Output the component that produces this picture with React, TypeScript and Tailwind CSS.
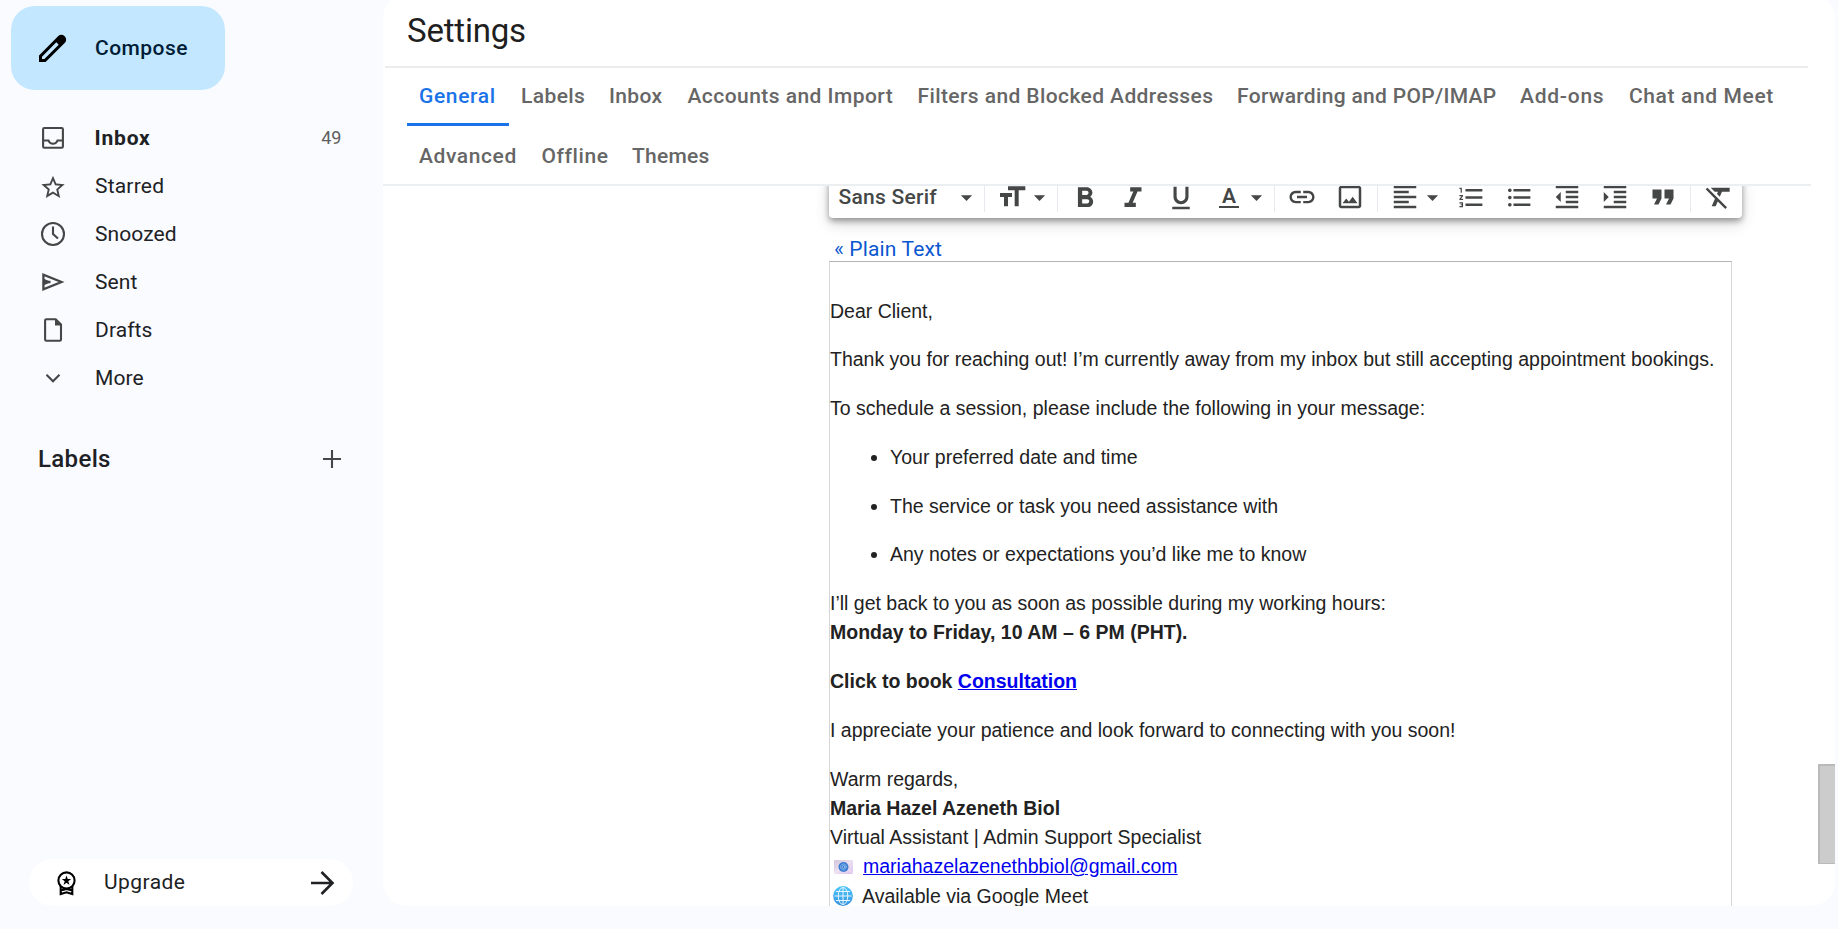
import type { ReactNode } from 'react';
import {
  MdArrowDropDown,
  MdFormatAlignLeft,
  MdFormatBold,
  MdFormatClear,
  MdFormatIndentDecrease,
  MdFormatIndentIncrease,
  MdFormatItalic,
  MdFormatListBulleted,
  MdFormatListNumbered,
  MdFormatQuote,
  MdFormatSize,
  MdFormatUnderlined,
  MdLink,
  MdOutlineImage,
  MdStarBorder,
} from 'react-icons/md';

function Glyph({ children }: { children: ReactNode }) {
  return (
    <svg className="size-[30px] shrink-0" viewBox="0 0 30 30" fill="none" stroke="currentColor" strokeWidth="2.1">
      {children}
    </svg>
  );
}

const folders = [
  {
    label: 'Starred',
    spacing: 'tracking-[0.2px]',
    icon: <MdStarBorder className="mx-px size-7 shrink-0 translate-y-[1.5px]" />,
  },
  {
    label: 'Snoozed',
    spacing: 'tracking-[0.1px]',
    icon: (
      <Glyph>
        <circle cx="15" cy="15" r="11" />
        <path d="M15 7.5V15l5 4.6" />
      </Glyph>
    ),
  },
  {
    label: 'Sent',
    spacing: 'tracking-[0.1px]',
    icon: (
      <Glyph>
        <path d="M5.4 7.6v14.8L23.5 15zM5.4 15h7" strokeWidth="2.3" />
        <path d="M5.4 11.6L13 15l-7.6 3.4z" fill="currentColor" stroke="none" />
      </Glyph>
    ),
  },
  {
    label: 'Drafts',
    spacing: 'tracking-[0.1px]',
    icon: (
      <Glyph>
        <path d="M8.3 4.2h9.4l5.3 5.3v15.1a1.2 1.2 0 0 1-1.2 1.2H8.3a1.2 1.2 0 0 1-1.2-1.2V5.4a1.2 1.2 0 0 1 1.2-1.2z" />
        <path d="M17 4l6.5 6.5H17z" fill="currentColor" stroke="none" />
      </Glyph>
    ),
  },
  {
    label: 'More',
    spacing: 'tracking-[0.1px]',
    icon: (
      <Glyph>
        <path d="M8.5 11.8l6.5 6.4 6.5-6.4" />
      </Glyph>
    ),
  },
];

function Sidebar() {
  return (
    <aside className="flex w-[383px] shrink-0 flex-col pt-1.5 text-[21px] text-[#202124]">
      <button className="ml-[11px] flex h-[84px] w-[214px] items-center rounded-3xl bg-[#c2e7ff] pl-[27px] font-medium tracking-[0.45px] text-[#001d35]">
        <svg className="size-[30px] shrink-0 text-black" viewBox="0 0 30 30" fill="currentColor">
          <path
            fillRule="evenodd"
            d="M1 22.5L20.3 3.1a4.3 4.3 0 0 1 6.1 0l.5.5a4.3 4.3 0 0 1 0 6.1L7.6 29H1zM4 23.7V26h2.4L20.7 11.7l-2.4-2.4z"
          />
        </svg>
        <span className="ml-[27px] pt-0.5">Compose</span>
      </button>

      <nav className="mt-6 flex flex-col">
        <a className="flex h-12 items-center pl-[38px] font-bold">
          <span className="text-[#444746]">
            <Glyph>
              <rect x="5.1" y="5" width="19.8" height="19.8" rx="1.2" />
              <path d="M5 17.5h5.5c.8 2.2 2.3 3.3 4.5 3.3s3.7-1.1 4.5-3.3H25" />
            </Glyph>
          </span>
          <span className="ml-[26.5px] pt-0.5 tracking-[0.8px]">Inbox</span>
          <span className="mr-[42px] ml-auto text-lg font-normal tracking-[-0.3px] text-[#5e5e5e]">49</span>
        </a>
        {folders.map((f) => (
          <a key={f.label} className="flex h-12 items-center pl-[38px]">
            <span className="flex text-[#444746]">{f.icon}</span>
            <span className={`ml-[27px] pt-0.5 ${f.spacing}`}>{f.label}</span>
          </a>
        ))}
      </nav>

      <div className="mt-8 flex h-12 items-center justify-between pr-9 pl-[38px] text-2xl font-medium tracking-[0.35px]">
        <span className="pt-0.5">Labels</span>
        <svg className="size-[30px] text-[#444746]" viewBox="0 0 30 30" stroke="currentColor" strokeWidth="2.1">
          <path d="M15 7v18M6 16h18" />
        </svg>
      </div>

      <button className="mt-auto mb-[23px] ml-[29px] flex h-[47px] w-[324px] items-center rounded-full bg-white pr-[15px] pl-[22px]">
        <svg className="size-[30px] shrink-0 text-black" viewBox="0 0 30 30" fill="none" stroke="currentColor" strokeWidth="2.1">
          <circle cx="15.5" cy="12.5" r="8.1" />
          <path d="M9.7 18v8l5.8-1.7 5.8 1.7v-8M9.7 22.5l5.8-1.5 5.8 1.5" />
          <path
            d="M15.5 7.5l1.2 3.6h3.5l-2.9 2.2 1.2 3.6-3-2.2-3 2.2 1.2-3.6-2.9-2.2h3.5z"
            fill="currentColor"
            stroke="none"
          />
        </svg>
        <span className="ml-[23px] tracking-[0.45px]">Upgrade</span>
        <svg className="ml-auto size-[30px]" viewBox="0 0 30 30" fill="none" stroke="currentColor" strokeWidth="2.6">
          <path d="M3 15h22M13.5 4L24.5 15l-11 11" />
        </svg>
      </button>
    </aside>
  );
}

const tabRows = [
  [
    { label: 'General', box: 'w-[102px] tracking-[0.65px]' },
    { label: 'Labels', box: 'w-[88px] tracking-[0.4px]' },
    { label: 'Inbox', box: 'w-[78.5px] tracking-[0.35px]' },
    { label: 'Accounts and Import', box: 'w-[230px] tracking-[0.45px]' },
    { label: 'Filters and Blocked Addresses', box: 'w-[319.5px] tracking-[0.4px]' },
    { label: 'Forwarding and POP/IMAP', box: 'w-[283px] tracking-[0.31px]' },
    { label: 'Add-ons', box: 'w-[109px] tracking-[0.75px]' },
    { label: 'Chat and Meet', box: 'w-[170px] tracking-[0.62px]' },
  ],
  [
    { label: 'Advanced', box: 'w-[122.5px] tracking-[0.6px]' },
    { label: 'Offline', box: 'w-[90.5px] tracking-[0.6px]' },
    { label: 'Themes', box: 'w-[102px] tracking-[0.25px]' },
  ],
];

function Separator() {
  return <div className="h-[30px] w-px shrink-0 bg-[#e6eaef]" />;
}

function Cell({ children }: { children: ReactNode }) {
  return <div className="flex w-12 shrink-0 items-center justify-center">{children}</div>;
}

function Slot({ children }: { children: ReactNode }) {
  return <div className="flex w-[30px] shrink-0 items-center justify-center">{children}</div>;
}

function Caret() {
  return (
    <div className="flex w-6 shrink-0 justify-center">
      <MdArrowDropDown className="size-[27px] shrink-0" />
    </div>
  );
}

function Toolbar() {
  return (
    <div className="-mt-[10px] ml-[446px] flex h-[42px] w-[913px] shrink-0 items-center rounded-[4px] bg-white text-[#444746] shadow-[0_3px_6px_rgba(0,0,0,0.36),0_6px_16px_rgba(0,0,0,0.14)]">
      <div className="flex w-[155px] items-center pr-1.5 pl-[9.5px]">
        <span className="flex-1 text-[21px] leading-6 font-medium tracking-[0.25px]">Sans Serif</span>
        <Caret />
      </div>
      <Separator />
      <div className="flex w-[72px] items-center pl-3">
        <Slot>
          <MdFormatSize className="size-8 shrink-0" />
        </Slot>
        <Caret />
      </div>
      <Separator />
      <div className="w-[3px]" />
      <Cell>
        <MdFormatBold className="size-[34px] translate-y-[1.5px]" />
      </Cell>
      <Cell>
        <MdFormatItalic className="size-[34px] translate-y-[1.5px]" />
      </Cell>
      <Cell>
        <MdFormatUnderlined className="size-[30px] translate-y-px" />
      </Cell>
      <div className="flex w-[69px] items-center pl-[9px]">
        <div className="flex w-[30px] flex-col items-center">
          <span className="text-[21px] leading-[20px] font-semibold">A</span>
          <span className="h-[2.5px] w-5 bg-[#444746]" />
        </div>
        <Caret />
      </div>
      <Separator />
      <div className="w-[3px]" />
      <Cell>
        <MdLink className="size-[30px]" />
      </Cell>
      <Cell>
        <MdOutlineImage className="size-[30px]" />
      </Cell>
      <div className="w-[3px]" />
      <Separator />
      <div className="flex w-[69px] items-center pl-3">
        <Slot>
          <MdFormatAlignLeft className="size-[30px]" />
        </Slot>
        <Caret />
      </div>
      <Cell>
        <MdFormatListNumbered className="size-[29px]" />
      </Cell>
      <Cell>
        <MdFormatListBulleted className="size-[29px]" />
      </Cell>
      <Cell>
        <MdFormatIndentDecrease className="size-[30px]" />
      </Cell>
      <Cell>
        <MdFormatIndentIncrease className="size-[30px]" />
      </Cell>
      <Cell>
        <MdFormatQuote className="size-9" />
      </Cell>
      <div className="w-[3px]" />
      <Separator />
      <div className="w-[3px]" />
      <Cell>
        <MdFormatClear className="size-8 translate-x-px" />
      </Cell>
    </div>
  );
}

function MailIcon() {
  return (
    <svg className="ml-1 h-[14px] w-[19px]" viewBox="0 0 19 14">
      <defs>
        <linearGradient id="paper" x1="0" y1="0" x2="1" y2="1">
          <stop offset="0" stopColor="#d3c6dc" />
          <stop offset="0.5" stopColor="#ecdff0" />
          <stop offset="1" stopColor="#dcc3ee" />
        </linearGradient>
      </defs>
      <rect width="19" height="14" rx="0.5" fill="url(#paper)" />
      <path d="M0 13.5l7-6M19 13.5l-7-6" stroke="#f6eff9" strokeWidth="0.8" />
      <circle cx="9.5" cy="7" r="5" fill="#3a7bd0" />
      <circle cx="9.5" cy="7" r="1.5" fill="none" stroke="#a8d2f8" strokeWidth="0.7" />
      <path d="M11 5.5v2.2c0 1.1 1.5.9 1.5-.7a3 3 0 1 0-1.5 2.6" fill="none" stroke="#a8d2f8" strokeWidth="0.6" />
    </svg>
  );
}

function GlobeIcon() {
  return (
    <svg className="ml-[3px] size-5" viewBox="0 0 20 20">
      <defs>
        <linearGradient id="sea" x1="0" y1="0" x2="0" y2="1">
          <stop offset="0" stopColor="#4cc6fb" />
          <stop offset="1" stopColor="#3a93e0" />
        </linearGradient>
      </defs>
      <circle cx="10" cy="10" r="9.9" fill="url(#sea)" />
      <g fill="none" stroke="#e4f6ff" strokeWidth="1">
        <path d="M10 1.5v17M1.5 10h17M3 5.5h14M3 14.5h14" />
        <ellipse cx="10" cy="10" rx="4.8" ry="8.5" />
      </g>
    </svg>
  );
}

function Message() {
  return (
    <div className="ml-[446px] flex w-[903px] shrink-0 flex-col gap-[19.5px] border border-b-0 border-[#d6d6d6] border-t-[#b4b4b4] pt-[34.5px] pb-10 font-['Liberation_Sans',Arial,sans-serif] text-[19.5px] leading-[29.25px] whitespace-nowrap text-[#222]">
      <p>Dear Client,</p>
      <p>Thank you for reaching out! I’m currently away from my inbox but still accepting appointment bookings.</p>
      <p>To schedule a session, please include the following in your message:</p>
      <ul className="flex list-disc flex-col gap-[19.5px] pl-[60px]">
        <li>Your preferred date and time</li>
        <li>The service or task you need assistance with</li>
        <li>Any notes or expectations you’d like me to know</li>
      </ul>
      <p>
        I’ll get back to you as soon as possible during my working hours:
        <br />
        <b>Monday to Friday, 10 AM – 6 PM (PHT).</b>
      </p>
      <p className="font-bold">
        Click to book <a className="text-[#0000ee] underline">Consultation</a>
      </p>
      <p>I appreciate your patience and look forward to connecting with you soon!</p>
      <div>
        <p>Warm regards,</p>
        <p className="font-bold">Maria Hazel Azeneth Biol</p>
        <p>Virtual Assistant | Admin Support Specialist</p>
        <p className="flex items-center gap-2.5">
          <MailIcon />
          <a className="text-[#0000ee] underline">mariahazelazenethbbiol@gmail.com</a>
        </p>
        <p className="flex items-center gap-[9px]">
          <GlobeIcon />
          Available via Google Meet
        </p>
      </div>
    </div>
  );
}

export default function App() {
  return (
    <div className="flex h-[929px] w-[1838px] overflow-hidden bg-[#f9fbff] font-['Roboto',sans-serif]">
      <Sidebar />
      <main className="relative -mt-1.5 flex h-[912px] w-[1452px] shrink-0 flex-col overflow-hidden rounded-3xl bg-white">
        <header className="mr-[27px] ml-0.5 flex h-[74px] shrink-0 items-center border-b-2 border-[#ececec] pt-px pl-[22px]">
          <h1 className="text-[33px] tracking-[-0.2px] text-[#1f1f1f]">Settings</h1>
        </header>
        <nav className="mr-6 flex h-[118px] shrink-0 flex-col border-b-2 border-[#eceff1] pl-6 text-[21px] font-medium text-[#666666]">
          {tabRows.map((row) => (
            <div key={row[0].label} className="flex h-[60px] shrink-0 items-start">
              {row.map((t) => (
                <a
                  key={t.label}
                  className={`flex h-[58px] items-center pl-3 whitespace-nowrap ${t.box} ${
                    t.label === 'General' ? 'border-b-[3px] border-[#1a73e8] pt-[2px] text-[#1a73e8]' : 'pb-px'
                  }`}
                >
                  {t.label}
                </a>
              ))}
            </div>
          ))}
        </nav>
        <section className="flex min-h-0 flex-1 flex-col overflow-hidden">
          <Toolbar />
          <a className="mt-5 ml-[451px] flex h-[23px] shrink-0 items-center text-[21px] tracking-[0.15px] text-[#0b57d0]">
            « Plain Text
          </a>
          <Message />
        </section>
        <div className="absolute top-[770px] right-0 h-[100px] w-[17px] border-t-2 border-b border-l-2 border-[#bababa] bg-[#cccccc]" />
      </main>
    </div>
  );
}
